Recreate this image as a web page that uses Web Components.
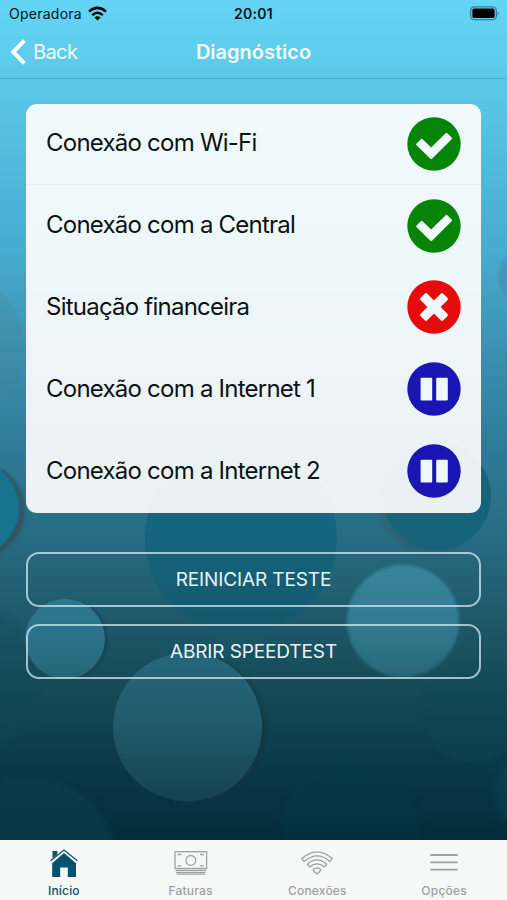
<!DOCTYPE html>
<html lang="pt-BR">
<head>
<meta charset="utf-8">
<meta name="viewport" content="width=device-width, initial-scale=1">
<title>Diagnóstico</title>
<style>
  html,
  body {
    margin: 0;
    height: 100%;
  }

  body {
    overflow: hidden;
    font-family: Inter, "Liberation Sans", sans-serif;
  }
</style>
</head>
<body>
<diagnostic-app>
  <status-bar slot="top" carrier="Operadora" time="20:01"></status-bar>
  <nav-bar slot="top" back="Back">Diagnóstico</nav-bar>

  <test-list>
    <test-row status="ok">Conexão com Wi-Fi</test-row>
    <test-row status="ok">Conexão com a Central</test-row>
    <test-row status="error">Situação financeira</test-row>
    <test-row status="paused">Conexão com a Internet 1</test-row>
    <test-row status="paused">Conexão com a Internet 2</test-row>
  </test-list>
  <outline-button>REINICIAR TESTE</outline-button>
  <outline-button>ABRIR SPEEDTEST</outline-button>

  <tab-bar slot="bottom">
    <tab-item icon="home" active>Início</tab-item>
    <tab-item icon="money">Faturas</tab-item>
    <tab-item icon="wifi">Conexões</tab-item>
    <tab-item icon="menu">Opções</tab-item>
  </tab-bar>
</diagnostic-app>

<script>
const STATUS_ICONS = {
  ok: {
    color: "#088408",
    shape: `<path stroke="#eff8fa" stroke-width="2.4" stroke-linejoin="round" d="M10.400 27.400L14.700 23L24.200 32.100L39.500 17L43.800 21.400L24.200 40.900Z"/>`,
  },
  error: {
    color: "#e80b0b",
    shape: `
      <g transform="rotate(45 27 27)">
        <rect x="11" y="22.300" width="32" height="9.400" rx="1.800"/>
        <rect x="22.300" y="11" width="9.400" height="32" rx="1.800"/>
      </g>`,
  },
  paused: {
    color: "#1a15b3",
    shape: `
      <rect x="13.600" y="15.800" width="11.600" height="22.800" rx="1"/>
      <rect x="29.200" y="15.800" width="11.600" height="22.800" rx="1"/>`,
  },
};

const TAB_ICONS = {
  home: `
    <path fill="currentColor" stroke="none" d="M5.500 2h4.900v3.200L5.500 9.400z"/>
    <path fill="currentColor" stroke="none" d="M17 3.900l12 10.300V27.900h-8.200v-9.500h-7.600v9.500H5.200V14.200z"/>
    <path stroke-width="1.300" d="M3.600 11.800L17 1L30.400 11.800"/>
    <path stroke="#f7f8f8" stroke-width="1" d="M4.600 13.200L17 3L29.400 13.200"/>`,
  money: `
    <rect x="1" y="2.700" width="31.600" height="16.800"/>
    <circle cx="16.800" cy="11.400" r="4.900"/>
    <path d="M3.500 5.500h4M26 5.500h4M3.500 16.800h4M26 16.800h4M1.500 21.400h30.600M2 23.400h29.600M2.600 25.200h28.400"/>`,
  wifi: `
    <path d="M1.800 9.600Q17 -3.800 32.200 9.600L29.900 12.400Q17 1.500 4.100 12.400Z"/>
    <path d="M7.400 15.200Q17 6.600 26.600 15.200L24.300 17.900Q17 12 9.700 17.900Z"/>
    <path d="M13.200 20.600Q17 17.400 20.800 20.600L19.800 22.500L17 25L14.200 22.500Z"/>`,
  menu: `<path stroke-width="1.800" stroke-linecap="round" d="M4 6h26M4 13.300h26M4 20.600h26"/>`,
};

class DiagnosticApp extends HTMLElement {
  constructor() {
    super();
    this.attachShadow({ mode: "open" });
  }

  connectedCallback() {
    this.shadowRoot.innerHTML = `
      <style>
        :host {
          position: relative;
          display: flex;
          flex-direction: column;
          width: 100%;
          height: 100vh;
          overflow: hidden;
        }

        .backdrop {
          position: absolute;
          inset: 0;
          width: 100%;
          height: 100%;
          z-index: -1;
        }

        main {
          flex: 1;
          display: flex;
          flex-direction: column;
          gap: 17px;
          padding: 24.6px 26px 0;
        }
      </style>

      <svg class="backdrop" viewBox="0 0 507 900" preserveAspectRatio="xMidYMin slice">
        <defs>
          <linearGradient id="sea" gradientUnits="userSpaceOnUse" x1="0" y1="0" x2="0" y2="840">
            <stop offset="0" stop-color="#64d5f6"/>
            <stop offset=".12" stop-color="#59c5e5"/>
            <stop offset=".3" stop-color="#48abd0"/>
            <stop offset=".41" stop-color="#3c92b2"/>
            <stop offset=".52" stop-color="#307d9b"/>
            <stop offset=".63" stop-color="#286d85"/>
            <stop offset=".72" stop-color="#205c6e"/>
            <stop offset=".83" stop-color="#144854"/>
            <stop offset=".91" stop-color="#0b3948"/>
            <stop offset="1" stop-color="#042c39"/>
          </linearGradient>
          <linearGradient id="bubble" x1="0" y1="0" x2="0" y2="1">
            <stop offset="0" stop-color="#26697c"/>
            <stop offset=".5" stop-color="#20596a"/>
            <stop offset="1" stop-color="#16424f"/>
          </linearGradient>
          <linearGradient id="bright" x1="0" y1="0" x2="0" y2="1">
            <stop offset="0" stop-color="#39839b"/>
            <stop offset=".5" stop-color="#317b92"/>
            <stop offset="1" stop-color="#276878"/>
          </linearGradient>
          <linearGradient id="dim" x1="0" y1="0" x2="0" y2="1">
            <stop offset="0" stop-color="#2d788f"/>
            <stop offset=".5" stop-color="#2a738b"/>
            <stop offset="1" stop-color="#246577"/>
          </linearGradient>
          <linearGradient id="deep" x1="0" y1="0" x2="0" y2="1">
            <stop offset="0" stop-color="#1a6f91"/>
            <stop offset=".6" stop-color="#15627a"/>
            <stop offset="1" stop-color="#15566a"/>
          </linearGradient>
          <filter id="soft"><feGaussianBlur stdDeviation="1.5"/></filter>
          <filter id="softer"><feGaussianBlur stdDeviation="3"/></filter>
        </defs>
        <rect width="507" height="900" fill="url(#sea)"/>
        <circle cx="-60" cy="350" r="84" fill="#4b8294" opacity=".25"/>
        <circle cx="526" cy="276" r="28" fill="#466d88" opacity=".25" filter="url(#soft)"/>
        <circle cx="-23" cy="510" r="48" fill="#34515d" opacity=".8" filter="url(#soft)"/>
        <circle cx="-29" cy="508" r="48" fill="#167491"/>
        <circle cx="241" cy="538" r="96" fill="url(#deep)"/>
        <circle cx="432" cy="500" r="54" fill="#355660" opacity=".35" filter="url(#soft)"/>
        <circle cx="437" cy="496" r="54" fill="#17637a"/>
        <circle cx="-38" cy="680" r="78" fill="#07495c" opacity=".25" filter="url(#softer)"/>
        <circle cx="29" cy="868" r="90" fill="#07424d" opacity=".5" filter="url(#softer)"/>
        <circle cx="350" cy="830" r="69" fill="#064452" opacity=".15" filter="url(#softer)"/>
        <circle cx="472" cy="713" r="50" fill="#07495c" opacity=".3" filter="url(#softer)"/>
        <circle cx="536" cy="792" r="42" fill="#07495c" opacity=".4" filter="url(#softer)"/>
        <circle cx="69" cy="640" r="39" fill="#183f4b" opacity=".7" filter="url(#soft)"/>
        <circle cx="65" cy="639" r="40" fill="url(#dim)"/>
        <circle cx="192" cy="728" r="74" fill="#12353f" opacity=".6" filter="url(#soft)"/>
        <circle cx="187.500" cy="727" r="74.500" fill="url(#bubble)"/>
        <circle cx="403" cy="621" r="56" fill="url(#bright)" filter="url(#soft)"/>
      </svg>

      <slot name="top"></slot>
      <main><slot></slot></main>
      <slot name="bottom"></slot>
    `;
  }
}

class StatusBar extends HTMLElement {
  constructor() {
    super();
    this.attachShadow({ mode: "open" });
  }

  connectedCallback() {
    this.shadowRoot.innerHTML = `
      <style>
        :host {
          display: grid;
          grid-template-columns: 1fr auto 1fr;
          align-items: center;
          height: 28px;
          padding: 0 7px 0 9px;
          box-sizing: border-box;
          color: #06161c;
        }

        .carrier {
          display: flex;
          align-items: center;
          gap: 6px;
          margin-top: -1px;
          font-size: 14px;
          letter-spacing: 0.25px;
        }

        .time {
          margin: -1px 2px 0 0;
          font-size: 14px;
          font-weight: 600;
          letter-spacing: 0.25px;
        }

        .battery {
          justify-self: end;
          margin-top: -2px;
        }
      </style>

      <div class="carrier">
        <span>${this.getAttribute("carrier")}</span>
        <svg width="19" height="15" viewBox="0 0 19 15" fill="none" stroke="#000" stroke-width="2.5">
          <path d="M1 5.600Q9.500 -1.900 18 5.600"/>
          <path d="M4.200 9.100Q9.500 4.500 14.800 9.100"/>
          <path d="M6.500 11.400Q9.500 8.900 12.500 11.400L9.500 14.500Z" fill="#000" stroke="none"/>
        </svg>
      </div>
      <span class="time">${this.getAttribute("time")}</span>
      <svg class="battery" width="30" height="15" viewBox="0 0 30 15">
        <rect x=".7" y=".9" width="25.600" height="12.800" rx="3.500" fill="none" stroke="#3b7e93" stroke-width="1.300"/>
        <rect x="2.400" y="2.600" width="22.200" height="9.400" rx="1.600"/>
        <path d="M27.600 5.200q2.400 2.100 0 4.200z" fill="#3b7e93"/>
      </svg>
    `;
  }
}

class NavBar extends HTMLElement {
  constructor() {
    super();
    this.attachShadow({ mode: "open" });
  }

  connectedCallback() {
    this.shadowRoot.innerHTML = `
      <style>
        :host {
          display: grid;
          grid-template-columns: 1fr auto 1fr;
          align-items: center;
          height: 51px;
          padding: 0 10px 2px;
          box-sizing: border-box;
          border-bottom: 1px solid #4aabc8;
          color: #f4fdff;
          font-size: 20px;
        }

        .back {
          display: flex;
          align-items: center;
          gap: 7px;
          letter-spacing: -0.6px;
        }

        .title {
          font-weight: 600;
        }
      </style>

      <div class="back">
        <svg width="16" height="26" viewBox="0 0 16 26" fill="none" stroke="#fff" stroke-width="4">
          <path d="M14.400 1.600L3.200 13L14.400 24.400"/>
        </svg>
        <span>${this.getAttribute("back")}</span>
      </div>
      <div class="title"><slot></slot></div>
    `;
  }
}

class TestList extends HTMLElement {
  constructor() {
    super();
    this.attachShadow({ mode: "open" });
  }

  connectedCallback() {
    this.shadowRoot.innerHTML = `
      <style>
        :host {
          display: block;
          margin-bottom: 22px;
          border-radius: 11px;
          overflow: hidden;
          background: rgba(255, 255, 255, 0.91);
        }

        ::slotted(test-row:first-child) {
          box-shadow: inset 0 -1px rgba(60, 110, 125, 0.05);
        }
      </style>
      <slot></slot>
    `;
  }
}

class TestRow extends HTMLElement {
  constructor() {
    super();
    this.attachShadow({ mode: "open" });
  }

  connectedCallback() {
    const icon = STATUS_ICONS[this.getAttribute("status")];

    this.shadowRoot.innerHTML = `
      <style>
        :host {
          display: flex;
          align-items: center;
          justify-content: space-between;
          height: 81.8px;
          padding: 0 20px 0 20px;
          box-sizing: border-box;
          color: #0b1215;
          font-size: 24px;
          letter-spacing: -0.77px;
        }

        span {
          margin-top: -3px;
        }

        svg {
          margin-top: -1.5px;
        }
      </style>

      <span><slot></slot></span>
      <svg width="54" height="54" viewBox="0 0 54 54" fill="#eff8fa">
        <circle cx="27" cy="27" r="26.700" fill="${icon.color}"/>
        ${icon.shape}
      </svg>
    `;
  }
}

class OutlineButton extends HTMLElement {
  constructor() {
    super();
    this.attachShadow({ mode: "open" });
  }

  connectedCallback() {
    this.shadowRoot.innerHTML = `
      <style>
        :host {
          display: block;
        }

        button {
          display: block;
          width: 100%;
          height: 55px;
          padding: 0;
          border: 2px solid rgba(215, 238, 246, 0.72);
          border-radius: 13px;
          background: transparent;
          color: #e6f5fa;
          font: inherit;
          font-size: 19px;
          letter-spacing: -0.12px;
        }
      </style>
      <button type="button"><slot></slot></button>
    `;
  }
}

class TabBar extends HTMLElement {
  constructor() {
    super();
    this.attachShadow({ mode: "open" });
  }

  connectedCallback() {
    this.shadowRoot.innerHTML = `
      <style>
        :host {
          display: grid;
          grid-template-columns: repeat(4, 1fr);
          height: 60px;
          background: #f7f8f8;
        }
      </style>
      <slot></slot>
    `;
  }
}

class TabItem extends HTMLElement {
  constructor() {
    super();
    this.attachShadow({ mode: "open" });
  }

  connectedCallback() {
    this.shadowRoot.innerHTML = `
      <style>
        :host {
          display: flex;
          flex-direction: column;
          align-items: center;
          padding: 9px 0 0 1px;
          color: #a0a0a0;
          font-size: 12px;
          font-weight: 500;
          line-height: 16px;
          letter-spacing: 0.2px;
        }

        :host([active]) {
          color: #07536d;
        }

        svg {
          display: block;
          margin-bottom: 6px;
        }
      </style>

      <svg width="34" height="28" viewBox="0 0 34 28" fill="none" stroke="currentColor" stroke-width="1.3">
        ${TAB_ICONS[this.getAttribute("icon")]}
      </svg>
      <span><slot></slot></span>
    `;
  }
}

customElements.define("diagnostic-app", DiagnosticApp);
customElements.define("status-bar", StatusBar);
customElements.define("nav-bar", NavBar);
customElements.define("test-list", TestList);
customElements.define("test-row", TestRow);
customElements.define("outline-button", OutlineButton);
customElements.define("tab-bar", TabBar);
customElements.define("tab-item", TabItem);
</script>
</body>
</html>
